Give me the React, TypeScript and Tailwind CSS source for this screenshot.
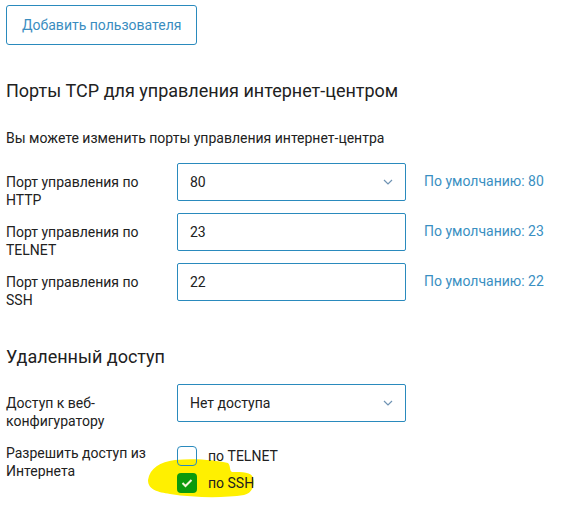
import { ReactNode } from 'react';

const BORDER = 'border-[#2a8abd]';

function Chevron() {
  return (
    <svg
      className="absolute right-[12px] top-1/2 -translate-y-1/2"
      width="10"
      height="6"
      viewBox="0 0 10 6"
      fill="none"
    >
      <path d="M1 1l4 4 4-4" stroke="#6f93b3" strokeWidth="1.2" />
    </svg>
  );
}

function Field({ value, select }: { value: string; select?: boolean }) {
  return (
    <div
      className={`relative flex h-[38px] w-[229px] shrink-0 items-center rounded-[2px] border ${BORDER} px-[12px] text-[14px] text-[#212121]`}
    >
      {value}
      {select && <Chevron />}
    </div>
  );
}

// label text wraps to two lines and hangs below the 38px field
function Row({
  label,
  children,
  className = '',
}: {
  label: ReactNode;
  children: ReactNode;
  className?: string;
}) {
  return (
    <div className={`flex h-[38px] items-start ${className}`}>
      <div className="w-[171px] shrink-0 pr-[20px] pt-[10px] text-[14px] leading-[18px] text-[#212121]">
        {label}
      </div>
      {children}
    </div>
  );
}

function PortRow({ label, port, select }: { label: string; port: string; select?: boolean }) {
  return (
    <Row label={label}>
      <Field value={port} select={select} />
      <div className="ml-[18px] pt-[9px] text-[14px] leading-[18px] text-[#3a8fc2]">
        По умолчанию: {port}
      </div>
    </Row>
  );
}

function Checkbox({ label, checked }: { label: string; checked?: boolean }) {
  return (
    <div className="flex h-[20px] items-center gap-[11px]">
      {checked ? (
        <div className="flex h-[20px] w-[20px] items-center justify-center rounded-[4px] bg-[#0b9a0c]">
          <svg width="12" height="10" viewBox="0 0 12 10" fill="none">
            <path d="M1.5 5l3 3 6-6" stroke="#f4f7d8" strokeWidth="2" />
          </svg>
        </div>
      ) : (
        <div className={`h-[20px] w-[20px] rounded-[4px] border ${BORDER}`} />
      )}
      <span className="text-[14px] text-[#212121]">{label}</span>
    </div>
  );
}

export default function App() {
  return (
    <div
      className="relative h-[508px] w-[561px] overflow-hidden bg-white pl-[6px] pt-[5px]"
      style={{ fontFamily: 'Roboto, "Noto Sans", sans-serif' }}
    >
      {/* marker stroke behind the SSH checkbox */}
      <svg
        className="pointer-events-none absolute left-0 top-0"
        width="561"
        height="508"
        viewBox="0 0 561 508"
      >
        <path
          d="M148 480 C150 468 160 462 175 460 C195 458 215 460 228 463 C231 466 229 470 232 472 C242 472 252 472 253 478 C255 486 252 493 244 495 C225 498 195 498 170 494 C158 492 148 490 148 480 Z"
          fill="#fff000"
        />
      </svg>

      <div className="relative">
        <button
          className={`h-[40px] rounded-[3px] border ${BORDER} px-[15px] text-[14px] text-[#3a8dbf]`}
        >
          Добавить пользователя
        </button>

        <h2 className="mt-[34px] text-[18px] leading-[24px] text-[#212121]">
          Порты TCP для управления интернет-центром
        </h2>
        <p className="mt-[25px] text-[14px] leading-[20px] text-[#212121]">
          Вы можете изменить порты управления интернет-центра
        </p>

        <div className="mt-[15px] flex flex-col gap-[12px]">
          <PortRow label="Порт управления по HTTP" port="80" select />
          <PortRow label="Порт управления по TELNET" port="23" />
          <PortRow label="Порт управления по SSH" port="22" />
        </div>

        <h2 className="mt-[44px] text-[18px] leading-[24px] text-[#212121]">
          Удаленный доступ
        </h2>

        <Row label="Доступ к веб-конфигуратору" className="mt-[15px]">
          <Field value="Нет доступа" select />
        </Row>

        <div className="mt-[22px] flex items-start">
          <div className="w-[171px] shrink-0 pr-[20px] text-[14px] leading-[18px] text-[#212121]">
            Разрешить доступ из Интернета
          </div>
          <div className="mt-[2px] flex flex-col gap-[7px]">
            <Checkbox label="по TELNET" />
            <Checkbox label="по SSH" checked />
          </div>
        </div>
      </div>
    </div>
  );
}
